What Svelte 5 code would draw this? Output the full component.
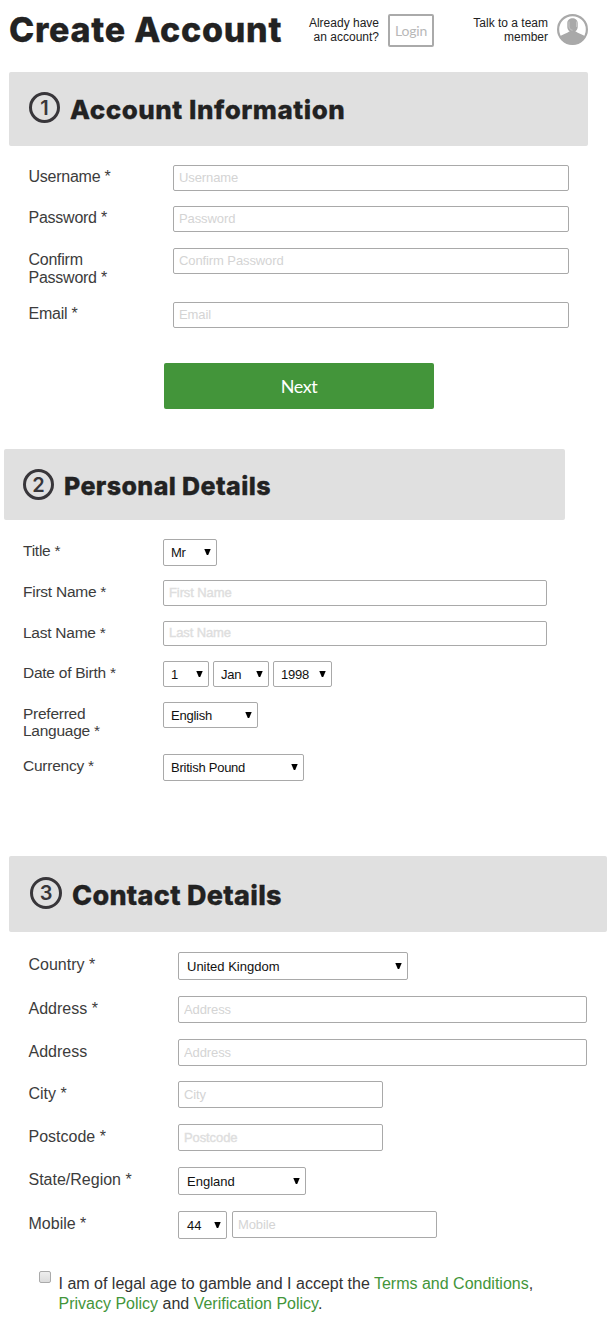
<script>
  const account = [
    { label: 'Username *', fields: [{ hint: 'Username', w: 396, h: 26 }], pitch: 41 },
    { label: 'Password *', fields: [{ hint: 'Password', w: 396, h: 26 }], pitch: 42 },
    { label: 'Confirm Password *', fields: [{ hint: 'Confirm Password', w: 396, h: 26 }], pitch: 54 },
    { label: 'Email *', fields: [{ hint: 'Email', w: 396, h: 26 }], pitch: 26 }
  ];
  const personal = [
    { label: 'Title *', fields: [{ value: 'Mr', w: 54, h: 27 }], pitch: 41 },
    { label: 'First Name *', fields: [{ hint: 'First Name', w: 384, h: 26, bold: true }], pitch: 41 },
    { label: 'Last Name *', fields: [{ hint: 'Last Name', w: 384, h: 25, bold: true }], pitch: 40 },
    { label: 'Date of Birth *', fields: [{ value: '1', w: 46, h: 26 }, { value: 'Jan', w: 56, h: 26 }, { value: '1998', w: 59, h: 26 }], pitch: 41 },
    { label: 'Preferred Language *', fields: [{ value: 'English', w: 95, h: 26 }], pitch: 52 },
    { label: 'Currency *', fields: [{ value: 'British Pound', w: 141, h: 27 }], pitch: 27 }
  ];
  const contact = [
    { label: 'Country *', fields: [{ value: 'United Kingdom', w: 230, h: 28 }], pitch: 44 },
    { label: 'Address *', fields: [{ hint: 'Address', w: 409, h: 27 }], pitch: 43 },
    { label: 'Address', fields: [{ hint: 'Address', w: 409, h: 27 }], pitch: 42 },
    { label: 'City *', fields: [{ hint: 'City', w: 205, h: 27 }], pitch: 43 },
    { label: 'Postcode *', fields: [{ hint: 'Postcode', w: 205, h: 27, bold: true }], pitch: 43 },
    { label: 'State/Region *', fields: [{ value: 'England', w: 128, h: 28 }], pitch: 44 },
    { label: 'Mobile *', fields: [{ value: '44', w: 49, h: 28 }, { hint: 'Mobile', w: 205, h: 27 }], pitch: 28 }
  ];
</script>

{#snippet heading(n, title)}
  <header class="bar">
    <span class="num">{n}</span>
    <h2>{title}</h2>
  </header>
{/snippet}

{#snippet rows(list)}
  <div class="rows">
    {#each list as row}
      <div class="row" style:height="{row.pitch}px">
        <span class="label">{row.label}</span>
        <div class="fields">
          {#each row.fields as f}
            {#if f.hint}
              <input class:bold={f.bold} placeholder={f.hint} aria-label={row.label} style:width="{f.w}px" style:height="{f.h}px" />
            {:else}
              <button class="select" type="button" style:width="{f.w}px" style:height="{f.h}px">
                <span>{f.value}</span>
                <svg width="7" height="6" viewBox="0 0 7 6"><path d="M.3 0h6.400L4.200 6H2.800Z" /></svg>
              </button>
            {/if}
          {/each}
        </div>
      </div>
    {/each}
  </div>
{/snippet}

<main>
  <div class="top">
    <h1>Create Account</h1>
    <p class="already">Already have<br />an account?</p>
    <button class="login" type="button">Login</button>
    <p class="talk">Talk to a team<br />member</p>
    <svg class="agent" width="31" height="31" viewBox="0 0 31 31">
      <circle cx="15.5" cy="15.5" r="14.4" fill="#fff" stroke="#a9a9a9" stroke-width="2.2" />
      <path d="M2.500 22.500c2.500-2 7-2.800 10.500-5.500h5c3.500 2.700 8 3.500 10.500 5.500A14.800 14.800 0 0 1 15.500 30.500 14.800 14.800 0 0 1 2.500 22.500Z" fill="#a9a9a9" />
      <path d="M10.300 9c0-6.500 10.400-6.500 10.400 0v4c0 3-2.500 5-5.200 5s-5.200-2-5.200-5Z" fill="#a9a9a9" />
      <path d="M12 7.500v5.500c.8 2 1.800 3 3.500 3.200M19.500 7.500v5.500" fill="none" stroke="#d2d2d2" stroke-width=".7" />
    </svg>
  </div>

  <section class="s1">
    {@render heading(1, 'Account Information')}
    {@render rows(account)}
    <button class="next" type="button">Next</button>
  </section>

  <section class="s2">
    {@render heading(2, 'Personal Details')}
    {@render rows(personal)}
  </section>

  <section class="s3">
    {@render heading(3, 'Contact Details')}
    {@render rows(contact)}
    <div class="legal">
      <span class="check"></span>
      <p>I am of legal age to gamble and I accept the <a href="#terms">Terms and Conditions</a>,<br /><a href="#privacy">Privacy Policy</a> and <a href="#verify">Verification Policy</a>.</p>
    </div>
  </section>
</main>

<style>
  :global(body) { background: #fff; }
  * { box-sizing: border-box; }
  main {
    width: 614px;
    height: 1320px;
    overflow: hidden;
    font-family: "Liberation Sans", Arial, sans-serif;
    color: #333;
  }
  h1, h2, p { margin: 0; }
  button { font-family: inherit; padding: 0; margin: 0; }
  .top { display: flex; height: 72px; padding-left: 9px; align-items: flex-start; }
  h1 {
    width: 280px;
    padding-top: 9px;
    font: 800 34px/41px Inter, sans-serif;
    letter-spacing: 0.75px;
    color: #222;
    -webkit-text-stroke: 0.3px #222;
    white-space: nowrap;
  }
  .already, .talk { padding-top: 16px; font-size: 12px; line-height: 14px; text-align: right; color: #222; }
  .already { width: 90px; }
  .login {
    width: 46px;
    height: 33px;
    margin: 14px 0 0 9px;
    border: 2px solid #aaa;
    border-radius: 2px;
    background: #fff;
    color: #b8b8b8;
    font: 400 14px/29px Lato, sans-serif;
    letter-spacing: -0.2px;
  }
  .talk { width: 114px; }
  .agent { margin: 14px 0 0 9px; }
  .bar { display: flex; align-items: flex-start; background: #e0e0e0; border-radius: 2px; }
  .num {
    display: flex;
    align-items: center;
    justify-content: center;
    width: 31px;
    height: 31px;
    border: 3px solid #38363a;
    border-radius: 50%;
    color: #38363a;
    font: 600 20px/20px Inter, sans-serif;
  }
  h2 {
    font-family: Inter, sans-serif;
    font-weight: 800;
    line-height: 32px;
    color: #222;
    -webkit-text-stroke: 0.3px #222;
    white-space: nowrap;
  }
  .row { display: flex; align-items: flex-start; }
  .label { flex: none; color: #3c3c3c; }
  .fields { display: flex; gap: 4px; }
  input {
    border: 1px solid #a9a9a9;
    border-radius: 2px;
    padding: 0 5px 2px;
    background: #fff;
    font: 13px "Liberation Sans", Arial, sans-serif;
    letter-spacing: -0.1px;
    outline: 0;
  }
  input::placeholder { color: #d4d4d4; opacity: 1; }
  input.bold::placeholder { color: #dedede; -webkit-text-stroke: 0.4px #dedede; }
  .select {
    display: flex;
    align-items: center;
    justify-content: space-between;
    border: 1px solid #a9a9a9;
    border-radius: 2px;
    padding: 0 5px 0 8px;
    background: #fff;
    color: #111;
    font-size: 13px;
  }
  .select svg { flex: none; margin-top: -1px; fill: #000; }
  .s1 { height: 377px; padding-left: 9px; }
  .s1 .bar { width: 579px; height: 74px; padding: 20px 0 0 20px; }
  .s1 h2 { margin: 2px 0 0 10px; font-size: 26px; letter-spacing: 0.52px; }
  .s1 .rows { padding: 19px 0 0 19px; }
  .s1 .label { width: 145px; padding: 3px 50px 0 0.500px; font-size: 16px; line-height: 17.500px; letter-spacing: -0.25px; }
  .next {
    display: block;
    width: 270px;
    height: 46px;
    margin: 35px 0 0 155px;
    border: 0;
    border-radius: 2px;
    background: #43953a;
    color: #fff;
    font: 400 18px/46px Lato, sans-serif;
    letter-spacing: -0.5px;
  }
  .s2 { height: 407px; padding-left: 4px; }
  .s2 .bar { width: 561px; height: 71px; padding: 20px 0 0 19px; }
  .s2 h2 { margin: 1px 0 0 10px; font-size: 25px; letter-spacing: 0.4px; }
  .s2 .rows { padding: 19px 0 0 19px; }
  .s2 .label { width: 140px; padding: 3px 40px 0 0; font-size: 15.500px; line-height: 17px; letter-spacing: -0.25px; }
  .s2 .select { padding-left: 7px; letter-spacing: -0.25px; }
  .s3 { padding-left: 9px; }
  .s3 .bar { width: 598px; height: 76px; padding: 21px 0 0 21px; }
  .s3 .num { width: 32px; height: 32px; }
  .s3 h2 { margin: 3px 0 0 10px; font-size: 27px; letter-spacing: 0.3px; }
  .s3 .rows { padding: 20px 0 0 19px; }
  .s3 .label { width: 150px; padding: 4px 0 0 0.500px; font-size: 16px; line-height: 18px; }
  .s3 .fields { gap: 5px; }
  .s3 input { padding-bottom: 0; }
  .legal { display: flex; padding: 32px 0 0 30px; }
  .check {
    width: 12px;
    height: 12px;
    border: 1px solid #aaa;
    border-radius: 2px;
    background: linear-gradient(#eee, #dcdcdc);
  }
  .legal p { margin: 3px 0 0 7.500px; font-size: 16px; line-height: 20px; white-space: nowrap; }
  a { color: #43953a; text-decoration: none; }
</style>
